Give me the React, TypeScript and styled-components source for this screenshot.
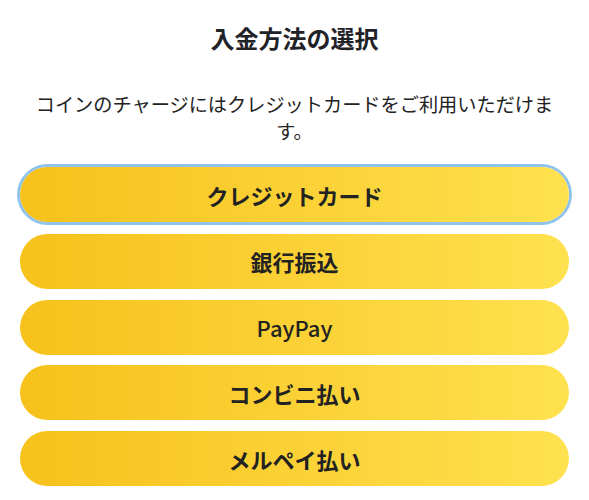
import React from 'react';
import styled, { createGlobalStyle } from 'styled-components';

const GlobalStyle = createGlobalStyle`
  body {
    margin: 0;
    background: #ffffff;
    font-family: "Noto Sans CJK JP", "Noto Sans", sans-serif;
    color: #1f2328;
  }
`;

const methods = [
  { label: 'クレジットカード' },
  { label: '銀行振込' },
  { label: 'PayPay', latin: true },
  { label: 'コンビニ払い' },
  { label: 'メルペイ払い' },
];

const PaymentPicker = () => {
  return (
    <Panel>
      <Title>入金方法の選択</Title>
      <Note>コインのチャージにはクレジットカードをご利用いただけます。</Note>
      <MethodList>
        {methods.map((m, i) => (
          <MethodButton key={m.label} $focused={i === 0} $latin={m.latin}>
            {m.label}
          </MethodButton>
        ))}
      </MethodList>
    </Panel>
  );
};

const Panel = styled.div`
  padding: 20px 20px;
  display: flex;
  flex-direction: column;
  align-items: stretch;
`;

const Title = styled.h2`
  margin: 0;
  font-size: 24px;
  line-height: 36px;
  font-weight: 700;
  text-align: center;
  color: #1f2328;
`;

const Note = styled.p`
  margin: 35px 0 0;
  font-size: 19.2px;
  line-height: 27px;
  font-weight: 400;
  text-align: center;
  color: #222;
`;

const MethodList = styled.div`
  margin-top: 22px;
  display: flex;
  flex-direction: column;
  gap: 10.8px;
`;

const MethodButton = styled.button<{ $focused?: boolean; $latin?: boolean }>`
  height: 55px;
  width: 100%;
  border: none;
  border-radius: 28px;
  background: linear-gradient(90deg, #f6c11b 0%, #ffe14f 100%);
  font-family: inherit;
  font-size: 22px;
  font-weight: ${(p) => (p.$latin ? 500 : 700)};
  color: #222;
  cursor: pointer;
  box-shadow: ${(p) => (p.$focused ? '0 0 0 3px #90c3eb' : 'none')};
  margin-bottom: ${(p) => (p.$focused ? '1px' : '0')};
`;

export default function App() {
  return (
    <>
      <GlobalStyle />
      <PaymentPicker />
    </>
  );
}
